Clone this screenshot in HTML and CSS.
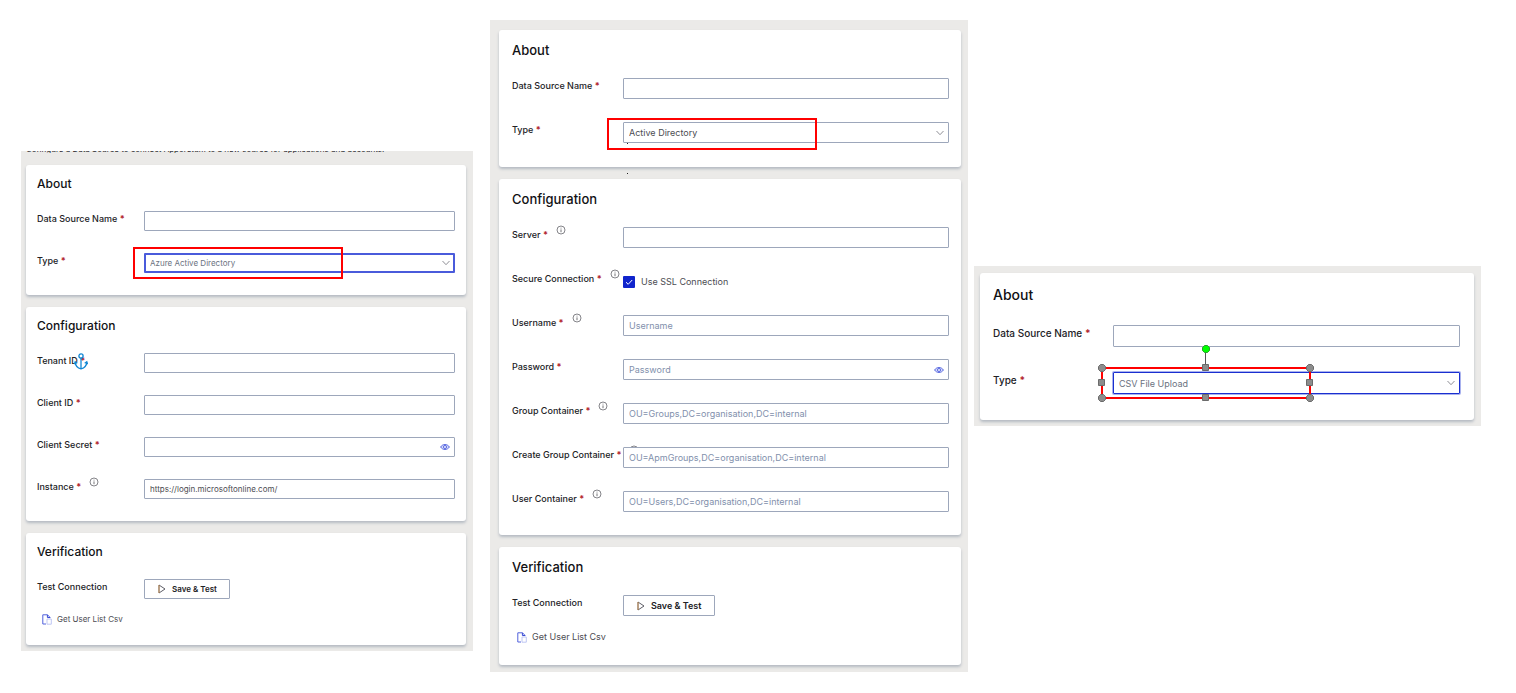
FILE: index.html
```html
<!DOCTYPE html>
<html lang="en">
<head>
<meta charset="utf-8">
<title>Data source types</title>
<link rel="stylesheet" href="styles.css">
</head>
<body>
<svg class="sprite" aria-hidden="true">
  <symbol id="chevron" viewBox="0 0 8 6"><path d="M0.5 1 L4 4.7 L7.5 1" fill="none" stroke="currentColor"/></symbol>
  <symbol id="info" viewBox="0 0 10 10"><circle cx="5" cy="5" r="4" fill="none" stroke="currentColor" stroke-width=".8"/><path d="M5 4.4V7.2M5 2.7V3.5" stroke="currentColor" stroke-width=".9"/></symbol>
  <symbol id="eye" viewBox="0 0 10 8"><path d="M.6 4C2.6 .7 7.4 .7 9.4 4C7.4 7.3 2.6 7.3 .6 4Z" fill="#d5dafa" stroke="#5b6be0"/><circle cx="5" cy="4" r="1.5" fill="#fff" stroke="#4355dc" stroke-width=".9"/></symbol>
  <symbol id="play" viewBox="0 0 8 10"><path d="M1 1V9L7 5Z" fill="#fff" stroke="#4b4b55" stroke-width=".9"/><path d="M1 1V9" stroke="#c98f4e" stroke-width=".9"/></symbol>
  <symbol id="doc" viewBox="0 0 10 11"><path d="M4 10H.8V.8H5.5L8 3.4V4" fill="none" stroke="#5262dc"/><path d="M5.4 .8V3.5H8" fill="none" stroke="#3a4bd4"/><path d="M5 5H9.3V10.2H5Z" fill="#fff" stroke="#b9c1f3" stroke-width=".9"/></symbol>
  <symbol id="anchor" viewBox="0 0 14 17"><g fill="none" stroke="#1187d4" stroke-width="1.3"><circle cx="7" cy="3" r="2.1"/><path d="M7 5.1V15.6M1.2 9.2C1.4 13 3.8 15 7 15.8C10.2 15 12.6 13 12.8 9.2M.3 11.2L1.2 8.8L3.3 10.3M13.7 11.2L12.8 8.8L10.7 10.3"/></g></symbol>
</svg>
<main class="board">

  <section class="panel panel-azure">
    <p class="intro"><span>Configure a Data Source to connect Apporetum to a new source for applications and accounts.</span></p>
    <form class="card">
      <h2>About</h2>
      <div class="row"><label for="a-name">Data Source Name <b>*</b></label><div class="field"><input id="a-name" type="text"></div></div>
      <div class="row"><label for="a-type">Type <b>*</b></label><div class="field focused"><select id="a-type"><option>Azure Active Directory</option></select><svg class="chevron"><use href="#chevron"/></svg><span class="mark"></span></div></div>
    </form>
    <form class="card">
      <h2>Configuration</h2>
      <div class="row"><label for="a-tenant">Tenant ID <b>*</b><svg class="anchor"><use href="#anchor"/></svg></label><div class="field"><input id="a-tenant" type="text"></div></div>
      <div class="row"><label for="a-client">Client ID <b>*</b></label><div class="field"><input id="a-client" type="text"></div></div>
      <div class="row"><label for="a-secret">Client Secret <b>*</b></label><div class="field"><input id="a-secret" type="password"><button class="reveal" type="button" aria-label="Show secret"><svg><use href="#eye"/></svg></button></div></div>
      <div class="row"><label for="a-instance">Instance <b>*</b><svg class="info"><use href="#info"/></svg></label><div class="field"><input id="a-instance" type="text" value="https://login.microsoftonline.com/"></div></div>
    </form>
    <section class="card verify">
      <h2>Verification</h2>
      <div class="row"><span class="label">Test Connection</span><div class="field"><button class="test" type="button"><svg><use href="#play"/></svg>Save &amp; Test</button></div></div>
      <a class="download" href="#"><svg><use href="#doc"/></svg>Get User List Csv</a>
    </section>
  </section>

  <section class="panel panel-ad">
    <form class="card about">
      <h2>About</h2>
      <div class="row"><label for="d-name">Data Source Name <b>*</b></label><div class="field"><input id="d-name" type="text"></div></div>
      <div class="row"><label for="d-type">Type <b>*</b></label><div class="field"><select id="d-type"><option>Active Directory</option></select><svg class="chevron"><use href="#chevron"/></svg><span class="mark"></span><span class="dot"></span><span class="dot dot-low"></span></div></div>
    </form>
    <form class="card">
      <h2>Configuration</h2>
      <div class="row"><label for="d-server">Server <b>*</b><svg class="info"><use href="#info"/></svg></label><div class="field"><input id="d-server" type="text"></div></div>
      <div class="row"><span class="label">Secure Connection <b>*</b><svg class="info"><use href="#info"/></svg></span><div class="field check"><input id="d-ssl" type="checkbox" checked><svg class="tick" viewBox="0 0 12 12"><path d="M3 6.2L5.2 8.3L9.2 4" fill="none" stroke="#fff"/></svg><label for="d-ssl">Use SSL Connection</label></div></div>
      <div class="row"><label for="d-user">Username <b>*</b><svg class="info"><use href="#info"/></svg></label><div class="field"><input id="d-user" type="text" placeholder="Username"></div></div>
      <div class="row"><label for="d-pass">Password <b>*</b></label><div class="field"><input id="d-pass" type="password" placeholder="Password"><button class="reveal" type="button" aria-label="Show password"><svg><use href="#eye"/></svg></button></div></div>
      <div class="row"><label for="d-group">Group Container <b>*</b><svg class="info"><use href="#info"/></svg></label><div class="field"><input id="d-group" type="text" placeholder="OU=Groups,DC=organisation,DC=internal"></div></div>
      <div class="row"><label for="d-create">Create Group Container <b>*</b><svg class="info"><use href="#info"/></svg></label><div class="field"><input id="d-create" type="text" placeholder="OU=ApmGroups,DC=organisation,DC=internal"></div></div>
      <div class="row"><label for="d-users">User Container <b>*</b><svg class="info"><use href="#info"/></svg></label><div class="field"><input id="d-users" type="text" placeholder="OU=Users,DC=organisation,DC=internal"></div></div>
    </form>
    <section class="card verify">
      <h2>Verification</h2>
      <div class="row"><span class="label">Test Connection</span><div class="field"><button class="test" type="button"><svg><use href="#play"/></svg>Save &amp; Test</button></div></div>
      <a class="download" href="#"><svg><use href="#doc"/></svg>Get User List Csv</a>
    </section>
  </section>

  <section class="panel panel-csv">
    <form class="card about">
      <h2>About</h2>
      <div class="row"><label for="c-name">Data Source Name <b>*</b></label><div class="field"><input id="c-name" type="text"></div></div>
      <div class="row"><label for="c-type">Type <b>*</b></label><div class="field focused"><select id="c-type"><option>CSV File Upload</option></select><svg class="chevron"><use href="#chevron"/></svg>
        <svg class="selection" viewBox="0 0 216 58">
          <path d="M107.5 6V24" stroke="#555"/>
          <rect x="4" y="23" width="208" height="30" fill="none" stroke="#f00" stroke-width="2"/>
          <g fill="#8c8c8c" stroke="#6b6b6b">
            <path d="M2.5 19.5h3l2 2v3l-2 2h-3l-2-2v-3zM210.5 19.5h3l2 2v3l-2 2h-3l-2-2v-3zM2.5 49.5h3l2 2v3l-2 2h-3l-2-2v-3zM210.5 49.5h3l2 2v3l-2 2h-3l-2-2v-3z"/>
            <path d="M104.5 19.5h6v6h-6zM104.5 49.5h6v6h-6zM.5 34.5h6v6h-6zM208.5 34.5h6v6h-6z"/>
          </g>
          <path d="M106.500 .5h3l2 2v3l-2 2h-3l-2-2v-3z" fill="#0f0" stroke="#2aa02a"/>
        </svg></div></div>
    </form>
  </section>

</main>
</body>
</html>
```
FILE: styles.css
```css
* { box-sizing: border-box; }

body {
  margin: 0;
  background: #fff;
  color: #222226;
  font-family: Inter, "Liberation Sans", sans-serif;
}

.sprite { position: absolute; width: 0; height: 0; }

.board {
  display: grid;
  grid-template-columns: 452fr 17fr 478fr 6fr 507fr;
  align-items: start;
  padding: 20px 35px 22px 21px;
}

.panel {
  --text: 9px;
  --label: 9px;
  --title: 13px;
  --height: 21px;
  --pitch: 44px;
  --labels: 111px;
  display: flex;
  flex-direction: column;
  gap: 12px;
  background: #ebeae8;
  font-size: var(--text);
}

.panel-azure {
  --text: 8px;
  --title: 12px;
  --height: 20px;
  --pitch: 42px;
  --labels: 107px;
  grid-column: 1;
  margin-top: 131px;
  padding: 0 7px 6px 5px;
}

.panel-ad { grid-column: 3; padding: 10px 7px 7px 9px; }

.panel-csv {
  --label: 10px;
  --title: 14px;
  --height: 22px;
  --pitch: 47px;
  --labels: 120px;
  grid-column: 5;
  margin-top: 246px;
  padding: 7px 7px 6px 6px;
}

.intro {
  display: flex;
  align-items: flex-end;
  height: 2px;
  margin: 0;
  overflow: hidden;
  line-height: 8px;
  white-space: nowrap;
}

.card {
  padding: 12px 12px 0 13px;
  border-radius: 3px;
  background: #fff;
  box-shadow: 0 2px 3px #b4bac2;
}

.panel-azure .card { padding: 11px 11px 0; }
.panel-csv .card { padding: 14px 14px 0 13px; }
.panel .about { padding-bottom: 1px; }

h2 {
  margin: 0 0 20px;
  color: #111114;
  font-size: var(--title);
  font-weight: 500;
  line-height: 16px;
}

.panel-azure h2 { margin-bottom: 19px; }
.panel-csv h2 { margin-bottom: 22px; }

.row {
  display: grid;
  grid-template-columns: var(--labels) minmax(0, 1fr);
  align-items: start;
  min-height: var(--pitch);
}

.row > label, .label {
  position: relative;
  font-size: var(--label);
  font-weight: 500;
  line-height: 16px;
  white-space: nowrap;
}

.row b { color: #b3262e; }

.field {
  position: relative;
  display: flex;
  align-items: center;
  height: var(--height);
}

input[type="text"], input[type="password"], select {
  width: 100%;
  height: 100%;
  margin: 0;
  padding: 0 5px;
  appearance: none;
  border: 1px solid #9da7bb;
  border-radius: 1px;
  background: #fff;
  color: #4c4c52;
  font: inherit;
  outline: 0;
}

input::placeholder { color: #8290ac; opacity: 1; }

.focused select { color: #6b7280; border-color: #1a2fd0; }
.panel-azure .focused select { padding: 0 4px; border: 2px solid #4a5bdb; }
.panel-csv .focused select { box-shadow: 0 0 0 1px #a9b2ee; }

.chevron {
  position: absolute;
  right: 5px;
  width: 8px;
  height: 6px;
  color: #8f8f96;
  pointer-events: none;
}

.info {
  width: 10px;
  height: 10px;
  margin: -4px 0 0 8px;
  color: #66666c;
  vertical-align: 3px;
}

.anchor {
  position: absolute;
  top: 0;
  left: 37px;
  width: 14px;
  height: 17px;
}

.reveal {
  position: absolute;
  right: 5px;
  display: flex;
  padding: 0;
  border: 0;
  background: none;
}

.reveal svg { width: 10px; height: 8px; }

.check input {
  width: 12px;
  height: 12px;
  margin: 0;
  appearance: none;
  border-radius: 1px;
  background: #1024cc;
}

.tick { position: absolute; left: 0; width: 12px; height: 12px; pointer-events: none; }
.check label { margin-left: 6px; color: #4c4c52; }

.test {
  display: flex;
  align-items: center;
  gap: 6px;
  height: 100%;
  padding: 0 12px 0 13px;
  border: 1px solid #9da7bb;
  border-radius: 1px;
  background: #fff;
  color: #222226;
  font: inherit;
  font-weight: 600;
}

.test svg { width: 8px; height: 10px; }

.download {
  display: flex;
  align-items: center;
  gap: 5px;
  width: max-content;
  margin: -9px 0 0 5px;
  color: #4c4c52;
  line-height: 14px;
  text-decoration: none;
}

.download svg { width: 10px; height: 11px; }

.verify { padding-bottom: 19px; }
.panel-azure .verify { padding-bottom: 19px; }
.panel-ad .verify { padding-bottom: 21px; }

.mark {
  position: absolute;
  top: -6px;
  left: -11px;
  width: 210px;
  height: 32px;
  border: 2px solid #f00;
  pointer-events: none;
}

.panel-ad .mark { top: -4px; left: -16px; }

.dot {
  position: absolute;
  top: 21px;
  left: 4px;
  width: 1px;
  height: 1px;
  background: #222;
}

.dot-low { top: 51px; }

.selection {
  position: absolute;
  top: -27px;
  left: -15px;
  width: 216px;
  height: 58px;
  pointer-events: none;
}
```
